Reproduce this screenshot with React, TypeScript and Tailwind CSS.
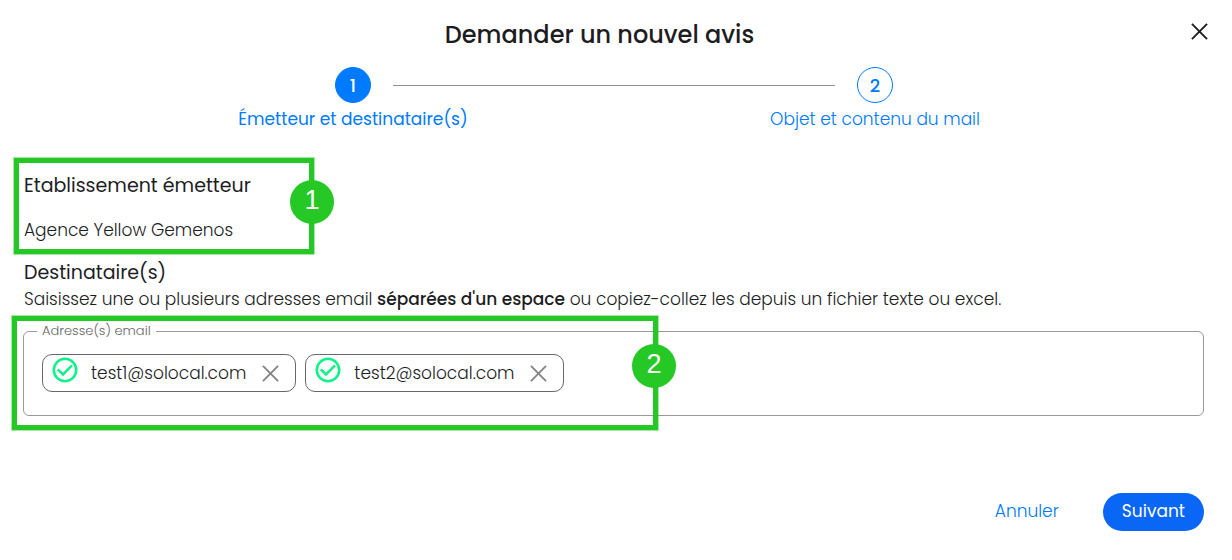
import React, { useState } from 'react'
import { clsx } from 'clsx'

const FONT = "font-[Poppins,Inter,'Open_Sans',sans-serif]"

interface CrossProps {
  className?: string
}

function Cross({ className }: CrossProps) {
  return (
    <svg viewBox="0 0 18 18" fill="none" stroke="currentColor" strokeWidth="2" className={className} aria-hidden="true">
      <path d="M1 1 17 17M17 1 1 17" />
    </svg>
  )
}

function CheckCircle() {
  return (
    <svg viewBox="0 0 26 26" fill="none" stroke="#12f08a" strokeWidth="2.6" className="size-[26px]" aria-hidden="true">
      <circle cx="13" cy="13" r="11.2" />
      <path d="M5.8 12.4 11 17.4 20 8.4" />
    </svg>
  )
}

interface StepProps {
  number: number
  label: string
  active?: boolean
  first?: boolean
  last?: boolean
}

function Step({ number, label, active, first, last }: StepProps) {
  return (
    <li className="flex flex-1 flex-col" aria-current={active ? 'step' : undefined}>
      <div className="flex items-center">
        <span className={clsx('mr-[22px] h-px flex-1', !first && 'bg-[#8c8f9c]')} />
        <span
          className={clsx(
            'flex size-9 items-center justify-center rounded-full border border-[#007aff] pt-0.5 text-lg font-medium',
            active ? 'bg-[#007aff] text-white' : 'text-[#007aff]'
          )}
        >
          {number}
        </span>
        <span className={clsx('ml-[22px] h-px flex-1', !last && 'bg-[#8c8f9c]')} />
      </div>
      <span className={clsx('mt-1 text-center text-[17px] leading-6 text-[#007aff]', active ? 'font-normal' : 'font-light')}>
        {label}
      </span>
    </li>
  )
}

interface MarkerProps {
  number: number
  frameClassName: string
  badgeClassName: string
}

// Green frame with a numbered badge sitting on its right edge
function Marker({ number, frameClassName, badgeClassName }: MarkerProps) {
  return (
    <div
      className={clsx(
        'pointer-events-none absolute border-5 border-[#25c825] outline outline-[#25c825]/40',
        frameClassName
      )}
    >
      <span
        className={clsx(
          "absolute flex size-11 items-center justify-center rounded-full bg-[#25c825] pb-1 font-['Liberation_Sans',sans-serif] text-[27px] leading-7 text-white",
          badgeClassName
        )}
      >
        {number}
      </span>
    </div>
  )
}

interface EmailChipProps {
  email: string
  onRemove: () => void
}

function EmailChip({ email, onRemove }: EmailChipProps) {
  return (
    <li className="flex h-[38px] items-center rounded-[10px] border border-[#66686e] pr-4 pl-[9px]">
      <span className="mb-1.5">
        <CheckCircle />
      </span>
      <span className="ml-[13px] text-[17px] leading-6 font-light">{email}</span>
      <button type="button" aria-label={`Supprimer ${email}`} onClick={onRemove} className="ml-4 text-[#858585]">
        <Cross className="size-[17px]" />
      </button>
    </li>
  )
}

export default function App() {
  const [emails, setEmails] = useState(['test1@solocal.com', 'test2@solocal.com'])
  const [draft, setDraft] = useState('')

  const handleChange = (value: string) => {
    if (value.endsWith(' ') && value.trim()) {
      setEmails([...emails, ...value.trim().split(/\s+/)])
      setDraft('')
      return
    }
    setDraft(value)
  }

  return (
    <main className={clsx('bg-white pt-4 pr-7 pb-7 pl-6 text-[#1d1d1f]', FONT)}>
      <header className="flex items-center">
        <h1 className="flex-1 pt-px pr-1 text-center text-2xl leading-9 font-medium">Demander un nouvel avis</h1>
        <button type="button" aria-label="Fermer" className="-mr-4 mb-1.5 px-3">
          <Cross className="size-[17px]" />
        </button>
      </header>

      <ol className="mt-3.5 flex px-17">
        <Step number={1} label="Émetteur et destinataire(s)" active first />
        <Step number={2} label="Objet et contenu du mail" last />
      </ol>

      <section className="relative mt-[41px]">
        <h2 className="text-[19px] leading-7">Etablissement émetteur</h2>
        <p className="mt-4 text-[17px] leading-7 font-light">Agence Yellow Gemenos</p>
        <Marker number={1} frameClassName="-top-3.5 -left-2.5 h-24 w-[300px]" badgeClassName="top-[17px] left-[271px]" />
      </section>

      <section className="mt-[15px]">
        <h2 className="text-[19px] leading-7">Destinataire(s)</h2>
        <p className="text-[17px] leading-6 font-light">
          Saisissez une ou plusieurs adresses email <strong className="font-medium">séparées d'un espace</strong> ou
          copiez-collez les depuis un fichier texte ou excel.
        </p>
        <div className="relative mt-3">
          <fieldset className="-ml-px rounded-md border border-[#999] pr-4 pb-[23px] pl-[13px]">
            <legend className="px-[5px] text-[13px] leading-4 font-light text-[#666]">
              <label htmlFor="emails">Adresse(s) email</label>
            </legend>
            <div className="mt-[15px] ml-[5px] flex flex-wrap items-center gap-[9px]">
              <ul className="flex flex-wrap gap-[9px]">
                {emails.map((email) => (
                  <EmailChip key={email} email={email} onRemove={() => setEmails(emails.filter((e) => e !== email))} />
                ))}
              </ul>
              <input
                id="emails"
                type="text"
                value={draft}
                onChange={(e) => handleChange(e.target.value)}
                className="h-9 min-w-40 flex-1 bg-transparent text-[17px] font-light outline-none"
              />
            </div>
          </fieldset>
          <Marker number={2} frameClassName="-top-[7px] -left-3 h-[114px] w-[646px]" badgeClassName="top-[23px] left-[615px]" />
        </div>
      </section>

      <footer className="mt-[77px] flex items-center justify-end gap-6">
        <button type="button" className="px-5 text-[17px] font-light text-[#007aff]">
          Annuler
        </button>
        <button type="button" className="h-[38px] rounded-full bg-[#0a66f5] px-[19px] text-[17px] text-white">
          Suivant
        </button>
      </footer>
    </main>
  )
}
